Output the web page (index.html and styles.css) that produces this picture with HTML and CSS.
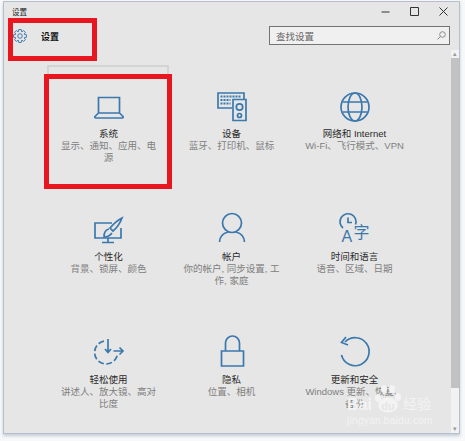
FILE: index.html
```html
<!DOCTYPE html>
<html lang="zh-CN">
<head>
    <meta charset="UTF-8">
    <meta name="viewport" content="width=device-width, initial-scale=1.0">
    <title>设置</title>
    <link rel="stylesheet" href="styles.css">
</head>
<body>

    <div class="window">
        <!-- 标题栏 -->
        <div class="titlebar">
            <span class="titlebar-text">设置</span>
            <div class="window-buttons">
                <svg class="win-btn" viewBox="0 0 11 11"><path d="M1.500 6h8"/></svg>
                <svg class="win-btn" viewBox="0 0 11 11"><path d="M1.500 1.500h8v8h-8z"/></svg>
                <svg class="win-btn" viewBox="0 0 11 11"><path d="M1.500 1.500l8 8M9.500 1.500l-8 8"/></svg>
            </div>
        </div>

        <!-- 头部 -->
        <div class="header">
            <div class="header-title">
                <svg class="gear" viewBox="-8 -8 16 16"><polygon points="-1.81,-4.98 -1.43,-7.36 1.43,-7.36 1.81,-4.98 2.24,-4.80 4.19,-6.21 6.21,-4.19 4.80,-2.24 4.98,-1.81 7.36,-1.43 7.36,1.43 4.98,1.81 4.80,2.24 6.21,4.19 4.19,6.21 2.24,4.80 1.81,4.98 1.43,7.36 -1.43,7.36 -1.81,4.98 -2.24,4.80 -4.19,6.21 -6.21,4.19 -4.80,2.24 -4.98,1.81 -7.36,1.43 -7.36,-1.43 -4.98,-1.81 -4.80,-2.24 -6.21,-4.19 -4.19,-6.21 -2.24,-4.80"/><circle r="2.600"/></svg>
                <span>设置</span>
            </div>
            <div class="search">
                <span>查找设置</span>
                <svg class="search-icon" viewBox="0 0 9 9"><circle cx="5.500" cy="3.500" r="2.800"/><path d="M3.500 5.500L.5 8.500"/></svg>
            </div>
        </div>

        <div class="content">
            <div class="grid">
                <div class="tile">
                    <svg class="icon" viewBox="0 0 30 30"><path d="M4.500 21V5.500h21V21M4.500 21h21l3.500 3.500q.8 1.500-1 1.500H2q-1.800 0-1-1.500z"/></svg>
                    <div class="tile-name">系统</div>
                    <div class="tile-desc">显示、通知、应用、电源</div>
                </div>
                <div class="tile">
                    <svg class="icon" viewBox="0 0 30 30"><path d="M15 16H1V1h26v6"/><path class="keys" d="M3.500 4.500h21M3.500 8h10M3.500 11.500h10"/><path d="M16 7.500h13v21H16z"/><circle cx="22.500" cy="15" r="3.200"/><circle cx="22.500" cy="23.500" r="2"/></svg>
                    <div class="tile-name">设备</div>
                    <div class="tile-desc">蓝牙、打印机、鼠标</div>
                </div>
                <div class="tile">
                    <svg class="icon" viewBox="0 0 30 30"><circle cx="15" cy="15" r="14"/><ellipse cx="15" cy="15" rx="7" ry="14"/><path d="M2.500 10h25M2.500 20h25"/></svg>
                    <div class="tile-name">网络和 Internet</div>
                    <div class="tile-desc">Wi-Fi、飞行模式、VPN</div>
                </div>
                <div class="tile">
                    <svg class="icon" viewBox="0 0 30 30"><path d="M18 8H1v15h26V13M14 23v4M8 27.500h12"/><path d="M28 3Q22 6 16 13l3 3Q25 11 28 3zM15 14q-5 1-5 8 5 0 8-4"/></svg>
                    <div class="tile-name">个性化</div>
                    <div class="tile-desc">背景、锁屏、颜色</div>
                </div>
                <div class="tile">
                    <svg class="icon" viewBox="0 0 30 30"><circle cx="15" cy="8" r="9.500"/><path d="M2.500 27Q3 19 11 17M27.500 27Q27 19 19 17"/></svg>
                    <div class="tile-name">帐户</div>
                    <div class="tile-desc">你的帐户, 同步设置, 工作, 家庭</div>
                </div>
                <div class="tile">
                    <svg class="icon" viewBox="0 0 30 30"><path d="M3 13A8 8 0 1 1 15.500 9.500M8 2.500v5h4"/><text class="glyph" x="1.500" y="27">A</text><text class="glyph" x="13.500" y="23">字</text></svg>
                    <div class="tile-name">时间和语言</div>
                    <div class="tile-desc">语音、区域、日期</div>
                </div>
                <div class="tile">
                    <svg class="icon" viewBox="0 0 30 30"><path class="dashed" d="M10 3.200A11.500 11.500 0 1 0 23.500 16"/><path d="M14 1v13M11 11l3 3.500 3-3.500M19.500 13H29M25.500 9.500L29 13l-3.500 3.500"/></svg>
                    <div class="tile-name">轻松使用</div>
                    <div class="tile-desc">讲述人、放大镜、高对比度</div>
                </div>
                <div class="tile">
                    <svg class="icon" viewBox="0 0 30 30"><path d="M4.500 13h22v15h-22zM8.500 13V5a7 7 0 0 1 14 0v8"/></svg>
                    <div class="tile-name">隐私</div>
                    <div class="tile-desc">位置、相机</div>
                </div>
                <div class="tile">
                    <svg class="icon" viewBox="0 0 30 30"><path d="M5 4A14 14 0 1 1 1.500 17M6 -1L1.500 4.500 8 7"/></svg>
                    <div class="tile-name">更新和安全</div>
                    <div class="tile-desc">Windows 更新、恢复、备份</div>
                </div>
            </div>
            <div class="scrollbar">
                <div class="scroll-arrow">&#9652;</div>
                <div class="scroll-thumb"></div>
                <div class="scroll-arrow scroll-arrow-down">&#9662;</div>
            </div>
        </div>

        <!-- 标注和水印 -->
        <div class="tile-hover"></div>
        <div class="mark mark-title"></div>
        <div class="mark mark-tile"></div>
        <div class="watermark">
            <div class="wm-logo">
                <span>Bai</span>
                <svg class="paw" viewBox="0 0 27 28"><ellipse cx="4" cy="13" rx="3" ry="4"/><ellipse cx="10" cy="4" rx="3" ry="4"/><ellipse cx="18" cy="4" rx="3" ry="4"/><ellipse cx="24" cy="12" rx="3" ry="4"/><ellipse cx="14" cy="20" rx="10" ry="7.500"/><text class="paw-du" x="14" y="25" text-anchor="middle">du</text></svg>
                <span class="wm-cn">经验</span>
            </div>
            <div class="wm-url">jingyan.baidu.com</div>
        </div>
    </div>

</body>
</html>
```

FILE: styles.css
```css
* {
    box-sizing: border-box;
}
body {
    margin: 0;
    width: 465px;
    height: 441px;
    overflow: hidden;
    background: #f7f8f9;
    font-family: "Liberation Sans", "Noto Sans CJK SC", sans-serif;
    padding: 1px 0 0 3px;
}
.window {
    position: relative;
    width: 457px;
    height: 433px;
    background: #e6e6e6;
    border: 1px solid #b4bfd0;
    display: flex;
    flex-direction: column;
    box-shadow: 0 2px 3px #c4ccd6;
}

/* titlebar */
.titlebar {
    height: 18px;
    padding-left: 8px;
    display: flex;
    justify-content: space-between;
    align-items: center;
}
.titlebar-text {
    font-size: 7.500px;
    color: #222;
}
.window-buttons {
    display: flex;
    gap: 18px;
    padding-right: 10px;
}
.win-btn {
    width: 11px;
    height: 11px;
    fill: none;
    stroke: #333;
    stroke-width: 1;
}

/* header */
.header {
    height: 30px;
    padding: 6px 9px 0 9px;
    display: flex;
    justify-content: space-between;
}
.header-title {
    display: flex;
    align-items: center;
    height: 20px;
    font-size: 9px;
    font-weight: bold;
    color: #111;
    gap: 14px;
}
.gear {
    width: 14px;
    height: 14px;
    fill: none;
    stroke: #3b78ad;
    stroke-width: 1.100;
}
.search {
    width: 181px;
    height: 19px;
    border: 1px solid #747474;
    background: #f0f0f0;
    display: flex;
    align-items: center;
    justify-content: space-between;
    padding: 0 3px 0 6px;
    font-size: 9.500px;
    color: #666;
}
.search-icon {
    width: 9px;
    height: 9px;
    fill: none;
    stroke: #8c8c8c;
    stroke-width: 1;
}

/* content */
.content {
    flex: 1;
    display: flex;
    min-height: 0;
}
.grid {
    flex: 1;
    display: grid;
    grid-template-columns: repeat(3, 123px);
    grid-auto-rows: 123px;
    padding: 42px 0 0 43px;
}
.tile {
    text-align: center;
    padding: 0 11px;
}
.icon {
    display: block;
    width: 30px;
    height: 30px;
    margin: 0 auto 5px;
    overflow: visible;
    fill: none;
    stroke: #3b78ad;
    stroke-width: 1.700;
}
.icon .keys {
    stroke-width: 2;
    stroke-dasharray: 2 1;
}
.icon .dashed {
    stroke-dasharray: 6 2.500;
}
.icon .glyph {
    font-size: 16px;
    fill: #3b78ad;
    stroke: none;
}
.tile-name {
    font-size: 9.500px;
    line-height: 13px;
    color: #2a2a2a;
}
.tile-desc {
    font-size: 9.500px;
    line-height: 11.500px;
    color: #808080;
}

/* scrollbar */
.scrollbar {
    width: 8px;
    background: #f2f2f2;
    display: flex;
    flex-direction: column;
    align-items: center;
}
.scroll-arrow {
    height: 8px;
    font-size: 7px;
    line-height: 8px;
    color: #999;
}
.scroll-arrow-down {
    margin-top: auto;
}
.scroll-thumb {
    width: 100%;
    height: 330px;
    background: #c2c2c2;
}

/* red boxes */
.tile-hover {
    position: absolute;
    left: 43px;
    top: 63px;
    width: 122px;
    height: 122px;
    border: 2px solid #d4d4d4;
}
.mark {
    position: absolute;
    border: 5px solid #e8161f;
}
.mark-title {
    left: 4px;
    top: 16px;
    width: 89px;
    height: 43px;
}
.mark-tile {
    left: 40px;
    top: 72px;
    width: 128px;
    height: 115px;
}

/* watermark */
.watermark {
    position: absolute;
    left: 343px;
    top: 382px;
    width: 90px;
    color: #f3f3f3;
}
.wm-logo {
    display: flex;
    align-items: flex-end;
    height: 29px;
    font-size: 16px;
    font-weight: bold;
    line-height: 17px;
}
.wm-cn {
    font-size: 14px;
    font-weight: normal;
    margin-left: 2px;
}
.paw {
    width: 27px;
    height: 28px;
    margin-left: 2px;
    fill: #f3f3f3;
}
.paw-du {
    font-size: 11px;
    font-weight: bold;
    fill: #e6e6e6;
}
.wm-url {
    font-size: 10px;
    line-height: 12px;
    margin-top: 2px;
    letter-spacing: .3px;
    white-space: nowrap;
}
```
